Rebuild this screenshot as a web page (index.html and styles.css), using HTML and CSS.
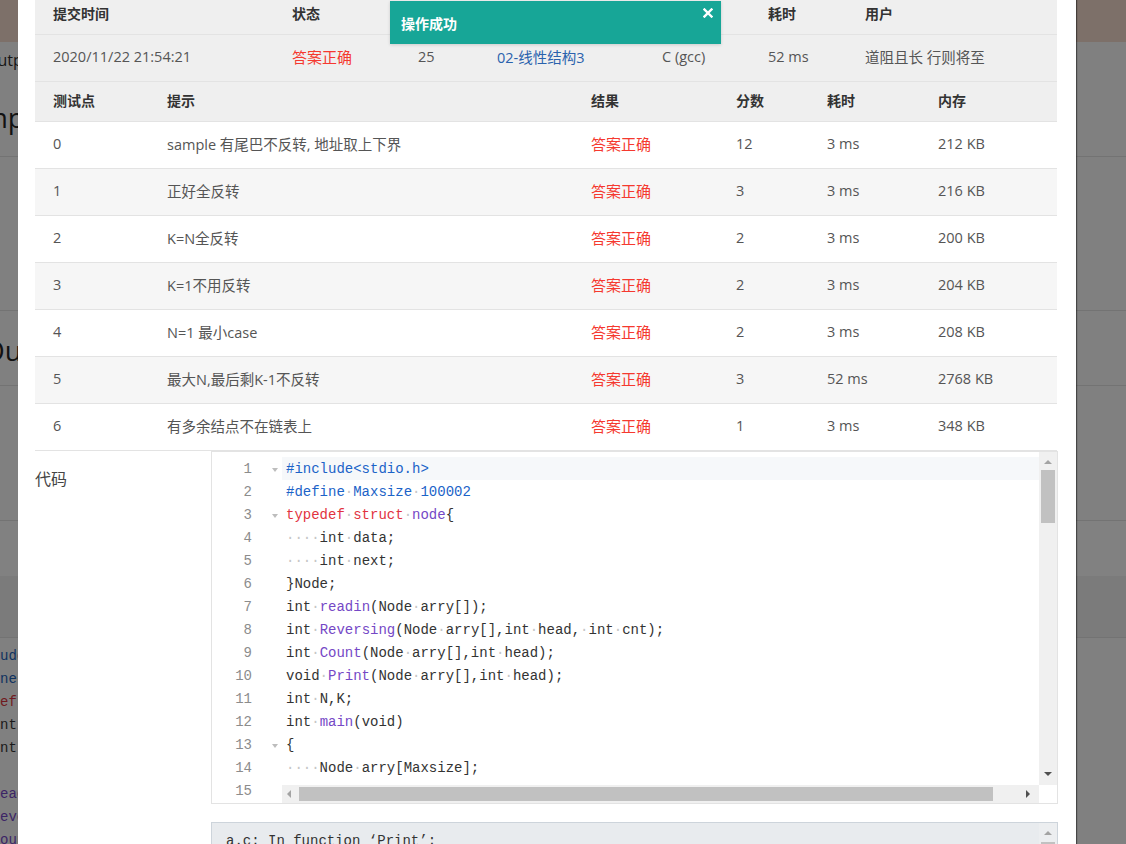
FILE: index.html
```html
<!DOCTYPE html>
<html lang="zh-CN">
<head>
<meta charset="utf-8">
<title>提交详情</title>
<link rel="stylesheet" href="styles.css">
</head>
<body>
<div class="page">
  <div class="pg-top"></div>
  <div class="pg-sec pg-s1">
    <div class="pg-small">Output</div>
    <div class="pg-big pg-big1">Sample</div>
  </div>
  <div class="pg-sec pg-s2"></div>
  <div class="pg-sec pg-s3"><div class="pg-big pg-big2">Output</div></div>
  <div class="pg-sec pg-s4"></div>
  <div class="pg-sec pg-s5"></div>
  <div class="pg-sec pg-s6"></div>
  <div class="pg-code">
    <div class="pl"><span class="b">#include&lt;stdio.h&gt;</span></div>
    <div class="pl"><span class="b">#define</span><span class="ws">·</span><span class="b">Maxsize</span><span class="ws">·</span><span class="b">100002</span></div>
    <div class="pl"><span class="r">typedef</span><span class="ws">·</span><span class="r">struct</span><span class="ws">·</span><span class="p">node</span>{</div>
    <div class="pl"><span class="ws">····</span>int<span class="ws">·</span>data;</div>
    <div class="pl"><span class="ws">····</span>int<span class="ws">·</span>next;</div>
    <div class="pl">}Node</div>
    <div class="pl">int<span class="ws">·</span><span class="p">readin</span>(Node<span class="ws">·</span>arry[]);</div>
    <div class="pl">int<span class="ws">·</span><span class="p">Reversing</span>(Node<span class="ws">·</span>arry[],int<span class="ws">·</span>head,<span class="ws">·</span>int<span class="ws">·</span>cnt);</div>
    <div class="pl">int<span class="ws">·</span><span class="p">Count</span>(Node<span class="ws">·</span>arry[],int<span class="ws">·</span>head);</div>
  </div>
</div>

<div class="modal">
  <div class="modal-body">
    <div class="sub">
      <div class="row head">
        <div>提交时间</div><div>状态</div><div>分数</div><div>题目</div><div>编译器</div><div>耗时</div><div>用户</div>
      </div>
      <div class="row">
        <div>2020/11/22 21:54:21</div><div class="ok">答案正确</div><div>25</div><div><a class="link" href="#">02-线性结构3</a></div><div>C (gcc)</div><div>52 ms</div><div>道阻且长 行则将至</div>
      </div>
    </div>

    <div class="cases">
      <div class="row head">
        <div>测试点</div><div>提示</div><div>结果</div><div>分数</div><div>耗时</div><div>内存</div>
      </div>
      <div class="row"><div>0</div><div>sample 有尾巴不反转, 地址取上下界</div><div class="ok">答案正确</div><div>12</div><div>3 ms</div><div>212 KB</div></div>
      <div class="row alt"><div>1</div><div>正好全反转</div><div class="ok">答案正确</div><div>3</div><div>3 ms</div><div>216 KB</div></div>
      <div class="row"><div>2</div><div>K=N全反转</div><div class="ok">答案正确</div><div>2</div><div>3 ms</div><div>200 KB</div></div>
      <div class="row alt"><div>3</div><div>K=1不用反转</div><div class="ok">答案正确</div><div>2</div><div>3 ms</div><div>204 KB</div></div>
      <div class="row"><div>4</div><div>N=1 最小case</div><div class="ok">答案正确</div><div>2</div><div>3 ms</div><div>208 KB</div></div>
      <div class="row alt"><div>5</div><div>最大N,最后剩K-1不反转</div><div class="ok">答案正确</div><div>3</div><div>52 ms</div><div>2768 KB</div></div>
      <div class="row"><div>6</div><div>有多余结点不在链表上</div><div class="ok">答案正确</div><div>1</div><div>3 ms</div><div>348 KB</div></div>
    </div>

    <div class="code-sec">
      <div class="code-label">代码</div>
      <div class="code-col">
        <div class="editor">
          <div class="gutter">
            <div class="gl"><span class="n">1</span><span class="fold"></span></div>
            <div class="gl"><span class="n">2</span></div>
            <div class="gl"><span class="n">3</span><span class="fold"></span></div>
            <div class="gl"><span class="n">4</span></div>
            <div class="gl"><span class="n">5</span></div>
            <div class="gl"><span class="n">6</span></div>
            <div class="gl"><span class="n">7</span></div>
            <div class="gl"><span class="n">8</span></div>
            <div class="gl"><span class="n">9</span></div>
            <div class="gl"><span class="n">10</span></div>
            <div class="gl"><span class="n">11</span></div>
            <div class="gl"><span class="n">12</span></div>
            <div class="gl"><span class="n">13</span><span class="fold"></span></div>
            <div class="gl"><span class="n">14</span></div>
            <div class="gl"><span class="n">15</span></div>
          </div>
          <div class="code">
            <div class="cl active"><span class="b">#include&lt;stdio.h&gt;</span></div>
            <div class="cl"><span class="b">#define</span><span class="ws">·</span><span class="b">Maxsize</span><span class="ws">·</span><span class="b">100002</span></div>
            <div class="cl"><span class="r">typedef</span><span class="ws">·</span><span class="r">struct</span><span class="ws">·</span><span class="p">node</span>{</div>
            <div class="cl"><span class="ws">····</span>int<span class="ws">·</span>data;</div>
            <div class="cl"><span class="ws">····</span>int<span class="ws">·</span>next;</div>
            <div class="cl">}Node;</div>
            <div class="cl">int<span class="ws">·</span><span class="p">readin</span>(Node<span class="ws">·</span>arry[]);</div>
            <div class="cl">int<span class="ws">·</span><span class="p">Reversing</span>(Node<span class="ws">·</span>arry[],int<span class="ws">·</span>head,<span class="ws">·</span>int<span class="ws">·</span>cnt);</div>
            <div class="cl">int<span class="ws">·</span><span class="p">Count</span>(Node<span class="ws">·</span>arry[],int<span class="ws">·</span>head);</div>
            <div class="cl">void<span class="ws">·</span><span class="p">Print</span>(Node<span class="ws">·</span>arry[],int<span class="ws">·</span>head);</div>
            <div class="cl">int<span class="ws">·</span>N,K;</div>
            <div class="cl">int<span class="ws">·</span><span class="p">main</span>(void)</div>
            <div class="cl">{</div>
            <div class="cl"><span class="ws">····</span>Node<span class="ws">·</span>arry[Maxsize];</div>
            <div class="cl"><span class="ws">····</span></div>
          </div>
          <div class="vscroll">
            <span class="arr arr-up"></span>
            <span class="vthumb"></span>
            <span class="arr arr-down"></span>
          </div>
          <div class="hscroll">
            <span class="arr arr-left"></span>
            <span class="hthumb"></span>
            <span class="arr arr-right"></span>
          </div>
          <div class="corner"></div>
        </div>
        <div class="output">
          <div class="out-line">a.c: In function ‘Print’:</div>
          <div class="out-scroll"><span class="arr arr-up"></span><span class="othumb"></span></div>
        </div>
      </div>
    </div>
  </div>
</div>

<div class="toast">
  <span class="toast-text">操作成功</span>
  <svg class="toast-close" width="10" height="10" viewBox="0 0 10 10"><path d="M1.5 1.5 L8.5 8.5 M8.5 1.5 L1.5 8.5" stroke="#fff" stroke-width="2.4" stroke-linecap="square"/></svg>
</div>
</body>
</html>
```

FILE: styles.css
```css
* { box-sizing: border-box; }
html, body { margin: 0; padding: 0; }
body {
  width: 1126px;
  height: 844px;
  overflow: hidden;
  position: relative;
  background: #808080;
  font-family: "Open Sans", "Noto Sans CJK SC", sans-serif;
}

/* ---------- dimmed page behind the modal ---------- */
.page { display: flex; flex-direction: column; }
.pg-top { height: 42px; background: #7d7069; flex: none; }
.pg-sec { border-bottom: 1px solid #737373; flex: none; }
.pg-s1 { height: 115px; padding-top: 8px; }
.pg-small { font-size: 16px; line-height: 20px; color: #161616; margin-left: -15px; white-space: nowrap; }
.pg-big { font-size: 28px; line-height: 36px; color: #121212; white-space: nowrap; }
.pg-big1 { margin-left: -49px; margin-top: 29px; }
.pg-s2 { height: 154px; }
.pg-s3 { height: 75px; padding-top: 21px; }
.pg-big2 { margin-left: -17px; }
.pg-s4 { height: 135px; }
.pg-s5 { height: 55px; border-bottom: none; background: #818181; }
.pg-s6 { height: 62px; background: #7b7b7b; }
.pg-code {
  padding-top: 7px;
  margin-left: -42px;
  font-family: "Liberation Mono", monospace;
  font-size: 14px;
  line-height: 23px;
  color: #1a1a1a;
}
.pl { height: 23px; white-space: pre; }
.pg-code .b { color: #0f325f; }
.pg-code .r { color: #701a20; }
.pg-code .p { color: #3c2566; }
.pg-code .ws { color: #666; }

/* ---------- modal ---------- */
.modal {
  position: absolute;
  left: 18px;
  top: 0;
  width: 1058px;
  height: 844px;
  background: #fff;
  overflow: hidden;
  box-shadow: 1px 0 1px rgba(0, 0, 0, 0.45);
}
.modal-body {
  margin-top: -5px;
  padding-left: 17px;
  width: 1041px;
}

.row {
  display: grid;
  align-items: center;
  border-bottom: 1px solid #e3e3e3;
  color: #555;
  font-size: 14.5px;
  height: 47px;
  padding-bottom: 3px;
}
.row > div { padding-left: 18px; white-space: nowrap; }
.row.head {
  height: 40px;
  color: #333;
  font-size: 14px;
  font-weight: 700;
}

.sub { width: 1022px; background: #efefef; }
.sub .row { grid-template-columns: 239px 126px 79px 165px 106px 97px 210px; }

.cases { width: 1022px; }
.cases .row { grid-template-columns: 114px 424px 145px 91px 111px 137px; }
.cases .row.head { background: #efefef; }
.cases .row.alt { background: #f6f6f6; }

.ok { color: #f5392f; font-size: 15px; }
.link { color: #2a62ad; text-decoration: none; }

/* ---------- code section ---------- */
.code-sec { display: grid; grid-template-columns: 176px 847px; }
.code-label {
  padding-top: 16px;
  font-size: 16px;
  line-height: 24px;
  color: #444;
}

.editor {
  position: relative;
  height: 353px;
  display: flex;
  border: 1px solid #e3e3e3;
  background: #fff;
  overflow: hidden;
  font-family: "Liberation Mono", monospace;
  font-size: 14px;
  line-height: 23px;
}
.gutter { flex: none; width: 70px; padding-top: 6px; color: #8c8c8c; }
.gl { display: grid; grid-template-columns: 40px 30px; height: 23px; }
.gl .n { text-align: right; }
.fold {
  align-self: center;
  margin-left: 20px;
  width: 0;
  height: 0;
  border-left: 3.5px solid transparent;
  border-right: 3.5px solid transparent;
  border-top: 4px solid #bdbdbd;
}
.code { flex: 1; padding-top: 5px; color: #333; }
.cl { height: 23px; padding-left: 4px; white-space: pre; line-height: 25px; }
.cl.active { background: #f6f8fa; }
.b { color: #1b63c8; }
.r { color: #e2333f; }
.p { color: #7548c6; }
.ws { color: #c6c6c6; }

/* scrollbars (overlay the text area) */
.vscroll {
  position: absolute;
  top: 0;
  right: 0;
  width: 18px;
  bottom: 18px;
  background: #f0f0f0;
}
.vthumb {
  position: absolute;
  left: 2px;
  top: 18px;
  width: 14px;
  height: 53px;
  background: #c1c1c1;
}
.hscroll {
  position: absolute;
  left: 70px;
  right: 18px;
  bottom: 0;
  height: 18px;
  background: #f0f0f0;
}
.hthumb {
  position: absolute;
  left: 17px;
  top: 2px;
  width: 694px;
  height: 14px;
  background: #c1c1c1;
}
.corner {
  position: absolute;
  right: 0;
  bottom: 0;
  width: 18px;
  height: 18px;
  background: #fff;
}
.arr { position: absolute; width: 0; height: 0; }
.arr-up {
  left: 5px;
  top: 8px;
  border-left: 4px solid transparent;
  border-right: 4px solid transparent;
  border-bottom: 4px solid #a3a3a3;
}
.arr-down {
  left: 5px;
  top: 320px;
  border-left: 4px solid transparent;
  border-right: 4px solid transparent;
  border-top: 4px solid #505050;
}
.arr-left {
  left: 5px;
  top: 5px;
  border-top: 4px solid transparent;
  border-bottom: 4px solid transparent;
  border-right: 4px solid #a3a3a3;
}
.arr-right {
  left: 744px;
  top: 5px;
  border-top: 4px solid transparent;
  border-bottom: 4px solid transparent;
  border-left: 4px solid #505050;
}

.output {
  position: relative;
  margin-top: 18px;
  height: 120px;
  padding: 8px 14px;
  background: #e8ebee;
  border: 1px solid #cdd4db;
  font-family: "Liberation Mono", monospace;
  font-size: 14px;
  line-height: 20px;
  color: #333;
}
.out-line { white-space: pre; }
.out-scroll {
  position: absolute;
  top: 0;
  right: 0;
  width: 18px;
  bottom: 0;
  background: #eceef0;
}
.othumb {
  position: absolute;
  left: 2px;
  top: 19px;
  width: 14px;
  height: 60px;
  background: #c1c1c1;
}

/* ---------- toast ---------- */
.toast {
  position: absolute;
  left: 390px;
  top: 1px;
  width: 331px;
  height: 43px;
  padding-left: 11px;
  display: flex;
  align-items: center;
  background: #17a697;
  color: #fff;
  font-size: 14px;
  font-weight: 700;
  box-shadow: 0 1px 3px rgba(0, 0, 0, 0.15);
}
.toast-close { position: absolute; right: 8px; top: 7px; }
```
